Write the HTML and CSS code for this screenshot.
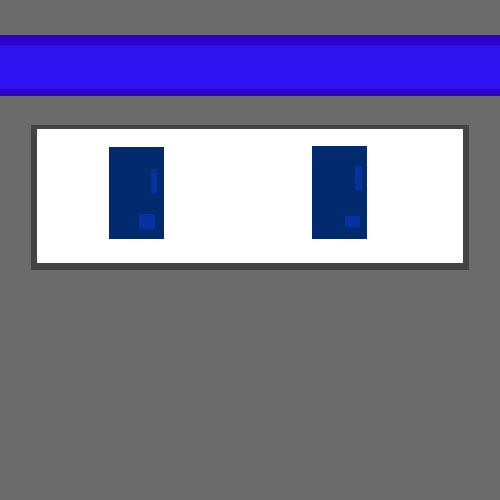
FILE: index.html
```html
<!DOCTYPE html>
<html>
<head>
<meta charset="utf-8">
<link rel="stylesheet" href="styles.css">
</head>
<body>
<div class="bar"></div>
<div class="panel">
  <div class="door door-a"><span class="mark mark-a1"></span><span class="mark mark-a2"></span></div>
  <div class="door door-b"><span class="mark mark-b1"></span><span class="mark mark-b2"></span></div>
</div>
</body>
</html>
```
FILE: styles.css
```css
html, body { margin: 0; padding: 0; }
body { background: #6b6b6b; width: 500px; height: 500px; overflow: hidden; font-family: "Liberation Sans", sans-serif; }
.bar {
  margin-top: 35px;
  height: 44px;
  background: #2e12f0;
  border-top: 10px solid #2c00c8;
  border-bottom: 7px solid #2c00c8;
}
.panel {
  margin: 29px 0 0 31px;
  width: 426px;
  height: 134px;
  background: #ffffff;
  border-style: solid;
  border-color: #444444;
  border-width: 4px 6px 7px 6px;
  display: flex;
  align-items: flex-start;
  padding-left: 72px;
  gap: 148px;
  box-sizing: content-box;
  width: 354px;
}
.door { position: relative; width: 55px; background: #022a6e; }
.door-a { margin-top: 18px; height: 92px; }
.door-b { margin-top: 17px; height: 93px; }
.mark { position: absolute; background: #0433a0; }
.mark-a1 { left: 42px; top: 22px; width: 6px; height: 24px; }
.mark-a2 { left: 30px; top: 67px; width: 16px; height: 15px; }
.mark-b1 { left: 43px; top: 20px; width: 7px; height: 24px; }
.mark-b2 { left: 33px; top: 70px; width: 15px; height: 11px; }
```
